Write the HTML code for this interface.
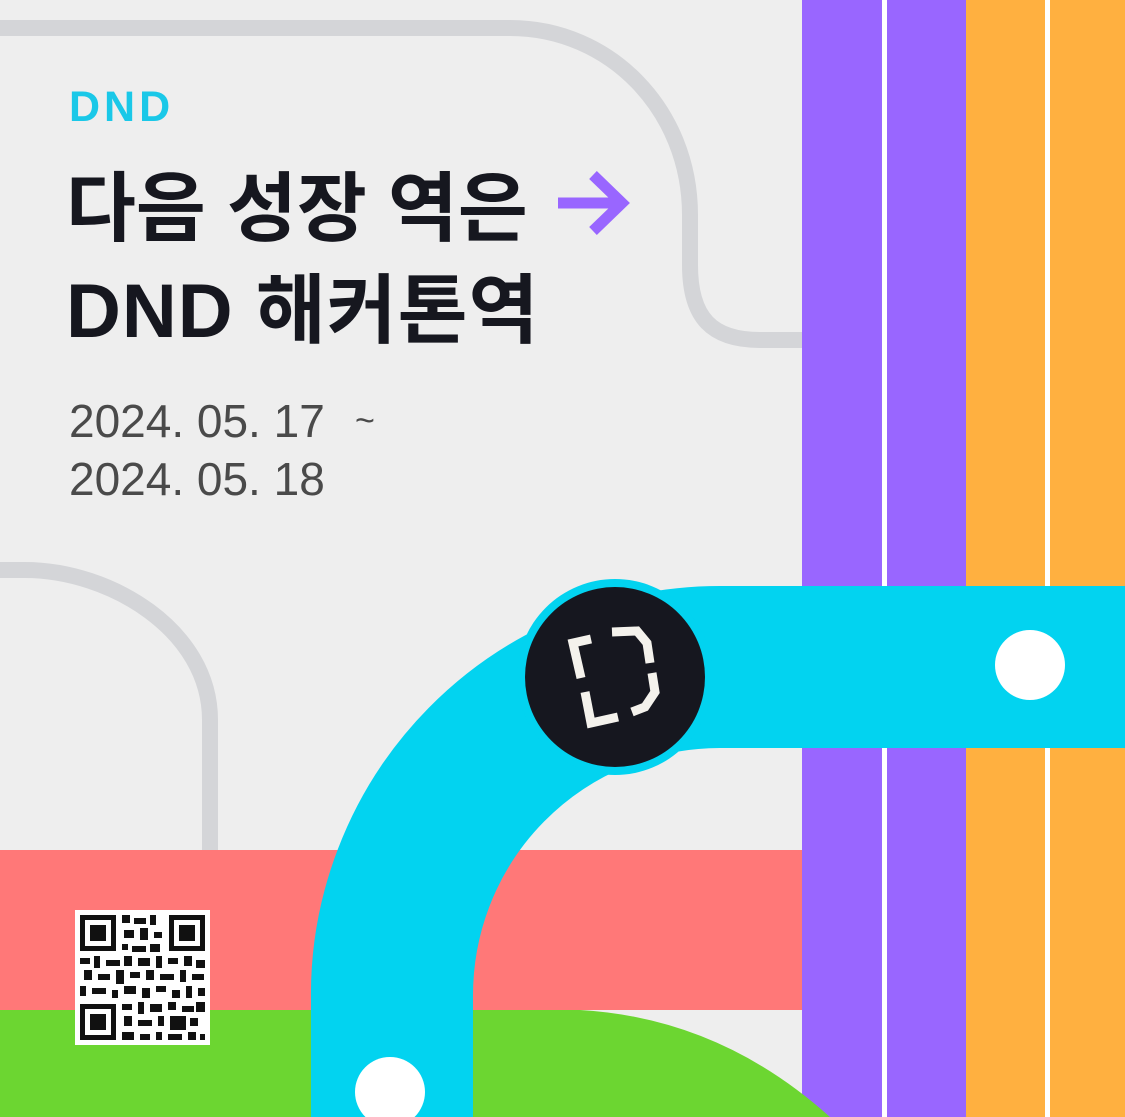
<!DOCTYPE html>
<html><head><meta charset="utf-8"><style>
html,body{margin:0;padding:0;width:1125px;height:1117px;overflow:hidden;background:#eeeeee}
svg{display:block}
</style></head><body>
<svg width="1125" height="1117" viewBox="0 0 1125 1117" xmlns="http://www.w3.org/2000/svg">
<rect width="1125" height="1117" fill="#eeeeee"/>
<path d="M0 28 L510 28 C610 28 690 110 690 215 L690 265 C690 318 712 340 760 340 L805 340" fill="none" stroke="#d4d5d8" stroke-width="16"/>
<path d="M0 570 L25 570 C110 570 210 630 210 720 L210 855" fill="none" stroke="#d4d5d8" stroke-width="16"/>
<rect x="0" y="850" width="805" height="160" fill="#ff7878"/>
<rect x="802" y="0" width="80" height="1117" fill="#9966ff"/>
<rect x="882" y="0" width="5" height="1117" fill="#ffffff"/>
<rect x="887" y="0" width="79" height="1117" fill="#9966ff"/>
<rect x="966" y="0" width="79" height="1117" fill="#ffb040"/>
<rect x="1045" y="0" width="5" height="1117" fill="#ffffff"/>
<rect x="1050" y="0" width="75" height="1117" fill="#ffb040"/>
<path d="M0 1010 L580 1010 Q720 1018 830 1117 L0 1117 Z" fill="#6cd631"/>
<path d="M392 1117 L392 1000 A328 328 0 0 1 720 667 L1125 667" fill="none" stroke="#02d3f0" stroke-width="162"/>
<circle cx="1030" cy="665" r="35" fill="#fff"/>
<circle cx="390" cy="1092" r="35" fill="#fff"/>
<circle cx="615" cy="677" r="98" fill="#02d3f0"/>
<circle cx="615" cy="677" r="90" fill="#16171f"/>
<g fill="none" stroke="#f4f2ec" stroke-width="9" stroke-linejoin="miter">
<polyline points="591,639 573,643 581,678"/>
<polyline points="585,692 591,723 618,717"/>
<polyline points="612,632 637,631 647,643 650,663"/>
<polyline points="652,673 655,692 645,707 632,712"/>
</g>
<rect x="75" y="910" width="135" height="135" fill="#fff"/>
<g fill="#111">
<rect x="80" y="915" width="36" height="36"/><rect x="85" y="920" width="26" height="26" fill="#fff"/><rect x="90" y="925" width="16" height="16"/>
<rect x="169" y="915" width="36" height="36"/><rect x="174" y="920" width="26" height="26" fill="#fff"/><rect x="179" y="925" width="16" height="16"/>
<rect x="80" y="1004" width="36" height="36"/><rect x="85" y="1009" width="26" height="26" fill="#fff"/><rect x="90" y="1014" width="16" height="16"/>
<path d="M122 915h8v8h-8zM134 918h12v6h-12zM150 915h6v10h-6zM124 930h10v8h-10zM140 928h8v12h-8zM154 932h8v6h-8zM122 944h6v6h-6zM132 946h14v6h-14zM150 944h10v8h-10z
M80 958h10v6h-10zM94 956h6v12h-6zM106 960h14v6h-14zM124 956h8v10h-8zM138 958h12v8h-12zM156 956h6v12h-6zM168 958h10v6h-10zM184 956h8v10h-8zM196 960h9v8h-9z
M84 970h8v10h-8zM98 974h12v6h-12zM116 970h8v14h-8zM130 972h10v6h-10zM146 970h8v10h-8zM160 974h14v6h-14zM180 970h6v12h-6zM192 974h12v6h-12z
M80 986h6v10h-6zM92 988h14v6h-14zM112 990h6v8h-6zM124 986h12v8h-12zM142 988h8v10h-8zM156 986h10v6h-10zM172 990h8v8h-8zM186 986h6v12h-6zM198 988h7v8h-7z
M122 1004h10v6h-10zM138 1002h6v12h-6zM150 1004h12v8h-12zM168 1002h8v8h-8zM182 1006h12v6h-12zM196 1002h9v10h-9z
M124 1016h8v10h-8zM138 1020h14v6h-14zM158 1016h6v10h-6zM170 1016h16v14h-16zM176 1020h6v6h-6zM190 1018h8v8h-8z
M122 1032h12v8h-12zM140 1034h10v6h-10zM156 1032h6v8h-6zM168 1034h14v6h-14zM188 1032h8v8h-8zM200 1034h5v6h-5z"/>
</g>
<text x="69" y="121" font-family="Liberation Sans, sans-serif" font-weight="bold" font-size="43" fill="#1ac8e8" letter-spacing="4">DND</text>
<text x="66" y="235" font-family="'Liberation Sans','Noto Sans CJK KR',sans-serif" font-weight="bold" font-size="76" fill="#16171f" letter-spacing="0">다음 성장 역은</text>
<text x="66" y="337" font-family="'Liberation Sans','Noto Sans CJK KR',sans-serif" font-weight="bold" font-size="76" fill="#16171f" letter-spacing="1">DND 해커톤역</text>
<g fill="none" stroke="#9966ff" stroke-width="11">
<line x1="558" y1="203" x2="622" y2="203"/>
<polyline points="593,175 622,203 593,231"/>
</g>
<text x="69" y="437" font-family="'Liberation Sans',sans-serif" font-size="46" fill="#4a4a4a">2024. 05. 17</text>
<text x="355" y="432" font-family="'Liberation Sans',sans-serif" font-size="34" fill="#4a4a4a">~</text>
<text x="69" y="495" font-family="'Liberation Sans',sans-serif" font-size="46" fill="#4a4a4a">2024. 05. 18</text>
</svg>
</body></html>
